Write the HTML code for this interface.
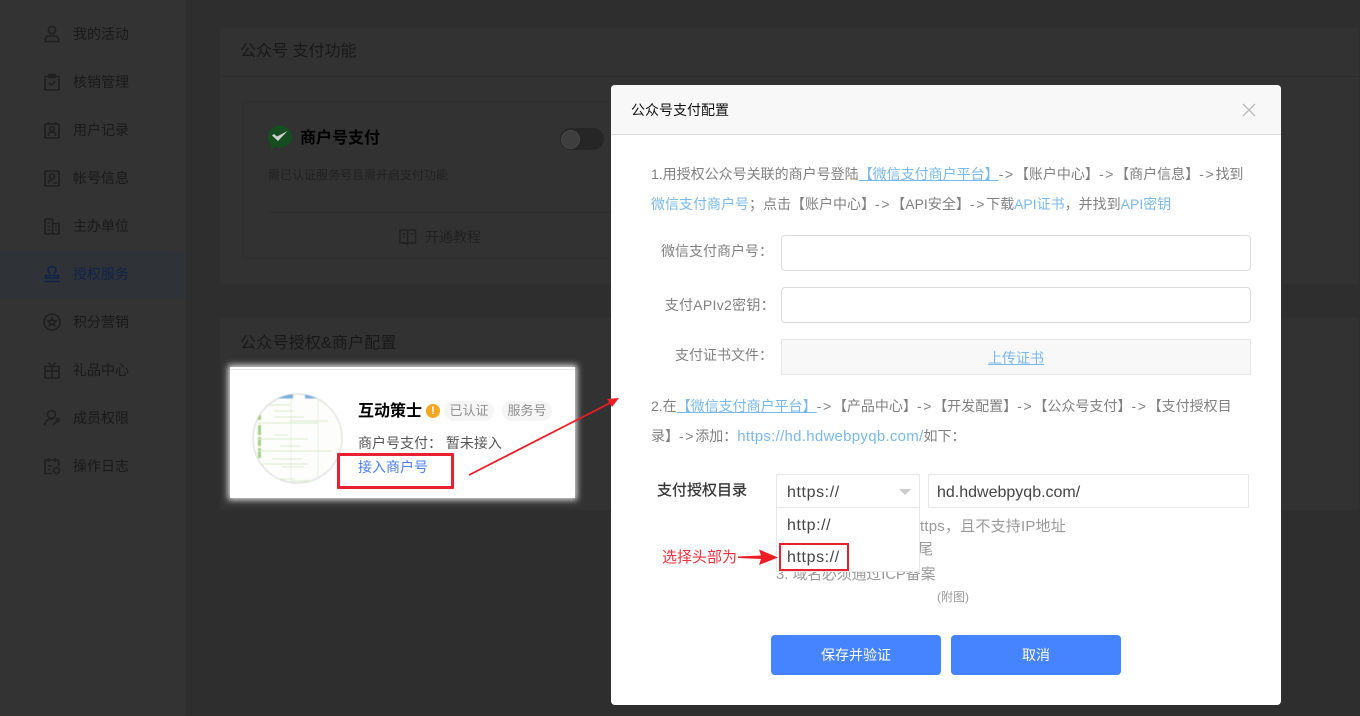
<!DOCTYPE html>
<html lang="zh"><head><meta charset="utf-8"><title>公众号支付配置</title>
<style>
*{box-sizing:border-box}
html,body{margin:0;padding:0;width:1360px;height:716px;overflow:hidden;background:#2e2e2e;font-family:"Liberation Sans","Noto Sans CJK SC",sans-serif}
.a{position:absolute;white-space:nowrap}
.nav{position:absolute;left:73px;font-size:14px;line-height:20px;color:#191919}
.ic{position:absolute;left:43px;width:18px;height:18px;fill:none;stroke:#1f1f1f;stroke-width:1.600}
.t{font-size:14px;line-height:20px;color:#808080}
.l{color:#79b8ea}
.u{color:#79b8ea;text-decoration:underline}
.r{letter-spacing:1.700px}
.inp{position:absolute;left:781px;width:470px;height:36px;background:#fff;border:1px solid #dcdcdc;border-radius:4px}
.btn{position:absolute;top:635px;width:170px;height:40px;background:#4583ff;border-radius:4px;color:#fff;font-size:14px;line-height:41px;text-align:center}
.tag{position:absolute;top:401px;height:20px;border-radius:10px;background:#f5f5f5;color:#8f8f8f;font-size:13px;line-height:20px;text-align:center}
</style></head><body>
<div class="a" style="left:0;top:0;width:186px;height:716px;background:#333"></div>
<div class="a" style="left:0;top:250px;width:186px;height:48px;background:#2f3236"></div>

<svg class="ic" style="top:25px" viewBox="0 0 18 18"><circle cx="9" cy="5" r="3.600"/><path d="M2.500 16.500v-2.200c0-2 1.600-3.300 3.500-3.300h6c1.900 0 3.500 1.300 3.500 3.300v2.200z"/></svg>
<div class="nav" style="top:24px">我的活动</div>
<svg class="ic" style="top:73px" viewBox="0 0 18 18"><rect x="2" y="3.500" width="14" height="13.500" rx="1"/><rect x="6" y="1.500" width="6" height="3" fill="#1f1f1f"/><path d="M6 10l2.300 2.300L12.500 8"/></svg>
<div class="nav" style="top:72px">核销管理</div>
<svg class="ic" style="top:121px" viewBox="0 0 18 18"><rect x="2" y="3" width="14" height="14" rx="1"/><path d="M5.500 1v3M12.500 1v3"/><circle cx="9" cy="8" r="2.400"/><path d="M5.500 15v-1.500c0-1.500 1.500-2.500 3.500-2.500s3.500 1 3.500 2.500V15"/></svg>
<div class="nav" style="top:120px">用户记录</div>
<svg class="ic" style="top:169px" viewBox="0 0 18 18"><rect x="2" y="2" width="14" height="15" rx="1"/><circle cx="9" cy="7.500" r="2.500"/><path d="M5.500 14.500v-1c0-1.500 1.500-2.500 3.500-2.500M10 14h4"/></svg>
<div class="nav" style="top:168px">帐号信息</div>
<svg class="ic" style="top:217px" viewBox="0 0 18 18"><path d="M2 17V2h7.500v15zM9.500 6.500H16V17H2"/><path d="M4.500 6h2.500M4.500 9.500h2.500M4.500 13h2.500M12 9.500h1.800M12 13h1.800"/></svg>
<div class="nav" style="top:216px">主办单位</div>
<svg class="ic" style="top:265px;stroke:#11234a" viewBox="0 0 18 18"><path d="M6.500 9V7.500C5.500 7 5 6 5 5c0-2 1.800-3.500 4-3.500S13 3 13 5c0 1-.5 2-1.500 2.500V9"/><path d="M2.500 10.500h13v2.500h-13zM1.500 16.500h15"/></svg>
<div class="nav" style="top:264px;color:#11234a">授权服务</div>
<svg class="ic" style="top:313px" viewBox="0 0 18 18"><circle cx="9" cy="9" r="8"/><path d="M9 5l1.200 2.500 2.800.4-2 1.900.5 2.700L9 11.200l-2.500 1.300.5-2.700-2-1.900 2.800-.4z"/></svg>
<div class="nav" style="top:312px">积分营销</div>
<svg class="ic" style="top:361px" viewBox="0 0 18 18"><path d="M2 5.500h14V17H2zM2 10h14M9 5.500V17M5.500 1.500L9 5.500l3.500-4"/></svg>
<div class="nav" style="top:360px">礼品中心</div>
<svg class="ic" style="top:409px" viewBox="0 0 18 18"><circle cx="8.500" cy="5.500" r="4"/><path d="M1.500 17c0-4 3-7 7-7h1.500M10 16l4-4"/><circle cx="15" cy="11" r="1.500"/></svg>
<div class="nav" style="top:408px">成员权限</div>
<svg class="ic" style="top:457px" viewBox="0 0 18 18"><path d="M9 16.500H2V3h13.500v6M5.500 1v4M12 1v4M5 9h4M5 12.500h2.500"/><circle cx="13.500" cy="13.500" r="3"/></svg>
<div class="nav" style="top:456px">操作日志</div>

<div class="a" style="left:219px;top:27px;width:1141px;height:258px;background:#323232;border:1px solid #2f2f2f;border-radius:4px"></div>
<div class="a" style="left:219px;top:76px;width:1141px;height:1px;background:#2d2d2d"></div>
<div class="a" style="left:240px;top:40px;font-size:16px;line-height:24px;color:#181818">公众号 支付功能</div>
<div class="a" style="left:243px;top:101px;width:400px;height:158px;background:#323232;border:1px solid #2e2e2e;border-radius:4px"></div>
<svg class="a" style="left:268px;top:125px" width="24" height="25" viewBox="0 0 24 25"><path d="M12 0.500C5.400 0.500 0 5.500 0 12c0 3.200 1.300 6 3.500 8l-.4 4.500 4.300-2.700c1.400.5 3 .7 4.600.7 6.600 0 12-5 12-10.500S18.600 0.500 12 0.500z" fill="#154e20"/><path d="M4 10.500l2-1.500 3 2.500 10.500-5.500-9.500 10z" fill="#d0d0d0"/></svg>
<div class="a" style="left:300px;top:127px;font-size:16px;line-height:24px;font-weight:700;color:#000">商户号支付</div>
<div class="a" style="left:560px;top:128px;width:44px;height:22px;border-radius:11px;background:#262626"></div>
<div class="a" style="left:561px;top:130px;width:19px;height:19px;border-radius:50%;background:#3e3e3e;border:1px solid #484848"></div>
<div class="a" style="left:268px;top:166px;font-size:12px;line-height:18px;color:#212121">需已认证服务号且需开启支付功能</div>
<div class="a" style="left:268px;top:212px;width:360px;height:1px;background:#2d2d2d"></div>
<svg class="a" style="left:399px;top:228px;fill:none;stroke:#212121;stroke-width:1.500" width="18" height="18" viewBox="0 0 18 18"><path d="M1 2h15.500v13H10l-1.500 1.500L7 15H1zM8.700 2v13M4 6h2M4 9h2M11.500 6H14"/></svg>
<div class="a" style="left:425px;top:227px;font-size:14px;line-height:20px;color:#212121">开通教程</div>

<div class="a" style="left:219px;top:317px;width:1141px;height:194px;background:#323232;border:1px solid #2f2f2f;border-radius:4px"></div>
<div class="a" style="left:240px;top:332px;font-size:16px;line-height:24px;letter-spacing:.2px;color:#181818">公众号授权&amp;商户配置</div>

<div class="a" style="left:230px;top:367px;width:345px;height:131px;background:#fff;box-shadow:0 0 6px 2px #e0e0e0"></div>
<div class="a" style="left:230px;top:369px;width:345px;height:1px;background:#e8e8e8"></div>
<svg class="a" style="left:252px;top:393px;filter:blur(.4px)" width="91" height="91" viewBox="0 0 91 91">
<defs><clipPath id="c"><circle cx="45.500" cy="45.500" r="44.500"/></clipPath></defs>
<circle cx="45.500" cy="45.500" r="44.500" fill="#fdfefc" stroke="#d6d6d6"/>
<g clip-path="url(#c)">
<path d="M26 1h15v4.500H26zM53 1h12v4.500H53z" fill="#7aaedb"/>
<path d="M6 22h3v5H6zM6 32h3v10H6zM6 44h3v9H6zM6 55h3v10H6z" fill="#a5cf85"/>
<path d="M39 6v84M66 6v84" stroke="#e6efe0" fill="none"/>
<path d="M14 12h24M22 18h20M22 24h30M38 28h38M6 30h60M22 42h14M6 46h50M28 53h20M6 58h74M20 66h30M6 71h50M30 74h22M40 88h24M20 86h22" stroke="#d9e8cd" stroke-width="1" fill="none"/>
</g></svg>
<div class="a" style="left:358px;top:400px;font-size:16px;line-height:24px;font-weight:700;color:#000">互动策士</div>
<div class="a" style="left:426px;top:404px;width:14px;height:14px;border-radius:50%;background:#f5a623;color:#fff;font-size:11px;line-height:14px;text-align:center;font-weight:700">!</div>
<div class="tag" style="left:444px;width:50px">已认证</div>
<div class="tag" style="left:502px;width:50px">服务号</div>
<div class="a" style="left:358px;top:433px;font-size:14px;line-height:20px;color:#555">商户号支付：&nbsp;暂未接入</div>
<div class="a" style="left:358px;top:457px;font-size:14px;line-height:20px;color:#4a7cf0">接入商户号</div>
<div class="a" style="left:337px;top:453px;width:117px;height:36px;border:3px solid #e8202f;border-radius:1px"></div>

<div class="a" style="left:611px;top:85px;width:670px;height:620px;background:#fff;border-radius:4px;overflow:hidden">
  <div class="a" style="left:0;top:0;width:670px;height:50px;background:#f8f8f8;border-bottom:1px solid #d9d9d9"></div>
  <div class="a" style="left:20px;top:15px;font-size:14px;line-height:20px;color:#111">公众号支付配置</div>
</div>
<svg class="a" style="left:1242px;top:103px;fill:none;stroke:#bbb;stroke-width:1.300" width="14" height="14" viewBox="0 0 14 14"><path d="M1 1l12 12M13 1L1 13"/></svg>

<div class="a t" style="left:651px;top:164px">1.用授权公众号关联的商户号登陆<span class="u">【微信支付商户平台】</span><span class="r">-&gt;</span>【账户中心】<span class="r">-&gt;</span>【商户信息】<span class="r">-&gt;</span>找到</div>
<div class="a t" style="left:651px;top:194px"><span class="l">微信支付商户号</span>；点击【账户中心】<span class="r">-&gt;</span>【API安全】<span class="r">-&gt;</span>下载<span class="l">API证书</span>，并找到<span class="l">API密钥</span></div>
<div class="a t" style="right:587px;top:241px">微信支付商户号：</div>
<div class="inp" style="top:235px"></div>
<div class="a t" style="right:585px;top:295px;letter-spacing:.3px">支付APIv2密钥：</div>
<div class="inp" style="top:287px"></div>
<div class="a t" style="right:587px;top:345px">支付证书文件：</div>
<div class="a" style="left:781px;top:339px;width:470px;height:36px;background:#f8f8f8;border:1px solid #e6e6e6"></div>
<div class="a t u" style="left:988px;top:348px">上传证书</div>
<div class="a t" style="left:651px;top:396px">2.在<span class="u">【微信支付商户平台】</span><span class="r">-&gt;</span>【产品中心】<span class="r">-&gt;</span>【开发配置】<span class="r">-&gt;</span>【公众号支付】<span class="r">-&gt;</span>【支付授权目</div>
<div class="a t" style="left:651px;top:426px">录】<span class="r">-&gt;</span>添加：<span class="l" style="font-size:15px;letter-spacing:.28px">https://hd.hdwebpyqb.com/</span>如下：</div>

<div class="a" style="left:657px;top:481px;font-size:15px;line-height:20px;color:#333;-webkit-text-stroke:.25px #333">支付授权目录</div>
<div class="a" style="left:776px;top:474px;width:144px;height:34px;border:1px solid #e8e8e8;background:#fff"></div>
<div class="a" style="left:787px;top:482px;font-size:16px;line-height:22px;letter-spacing:.6px;color:#444">https://</div>
<div class="a" style="left:899px;top:489px;width:0;height:0;border-left:6px solid transparent;border-right:6px solid transparent;border-top:6px solid #ccc"></div>
<div class="a" style="left:928px;top:474px;width:321px;height:34px;border:1px solid #e8e8e8;background:#fff"></div>
<div class="a" style="left:937px;top:482px;font-size:16px;line-height:22px;color:#444">hd.hdwebpyqb.com/</div>
<div class="a" style="left:776px;top:563px;font-size:14.800px;line-height:24px;color:#999">3. 域名必须通过ICP备案</div>
<div class="a" style="left:920px;top:515px;font-size:15px;line-height:24px;letter-spacing:.2px;color:#999">ttps，且不支持IP地址</div>
<div class="a" style="left:918px;top:538px;font-size:15px;line-height:24px;color:#999">尾</div>
<div class="a" style="left:776px;top:508px;width:144px;height:64px;background:#fff;border:1px solid #e8e8e8;border-top:0"></div>
<div class="a" style="left:787px;top:515px;font-size:16px;line-height:22px;letter-spacing:.6px;color:#444">http://</div>
<div class="a" style="left:787px;top:547px;font-size:16px;line-height:22px;letter-spacing:.6px;color:#444">https://</div>
<div class="a" style="left:779px;top:543px;width:70px;height:28px;border:2px solid #e8202f"></div>
<div class="a" style="left:662px;top:548px;font-size:15px;line-height:20px;color:#f0303c">选择头部为</div>
<svg class="a" style="left:736px;top:548px" width="44" height="20" viewBox="0 0 44 20"><path d="M2 8.500L25 7.500 23 1.500 42 9.500 23 17 25 11 2 10z" fill="#ee1c25"/></svg>
<div class="a" style="left:937px;top:588px;font-size:12px;line-height:18px;color:#999">(附图)</div>

<div class="btn" style="left:771px">保存并验证</div>
<div class="btn" style="left:951px">取消</div>

<svg class="a" style="left:465px;top:393px" width="160" height="90" viewBox="0 0 160 90"><path d="M4 82L145 10" stroke="#ee1c25" stroke-width="1.800" fill="none"/><path d="M154 5L142 6 147 14z" fill="#ee1c25"/></svg>
</body></html>
